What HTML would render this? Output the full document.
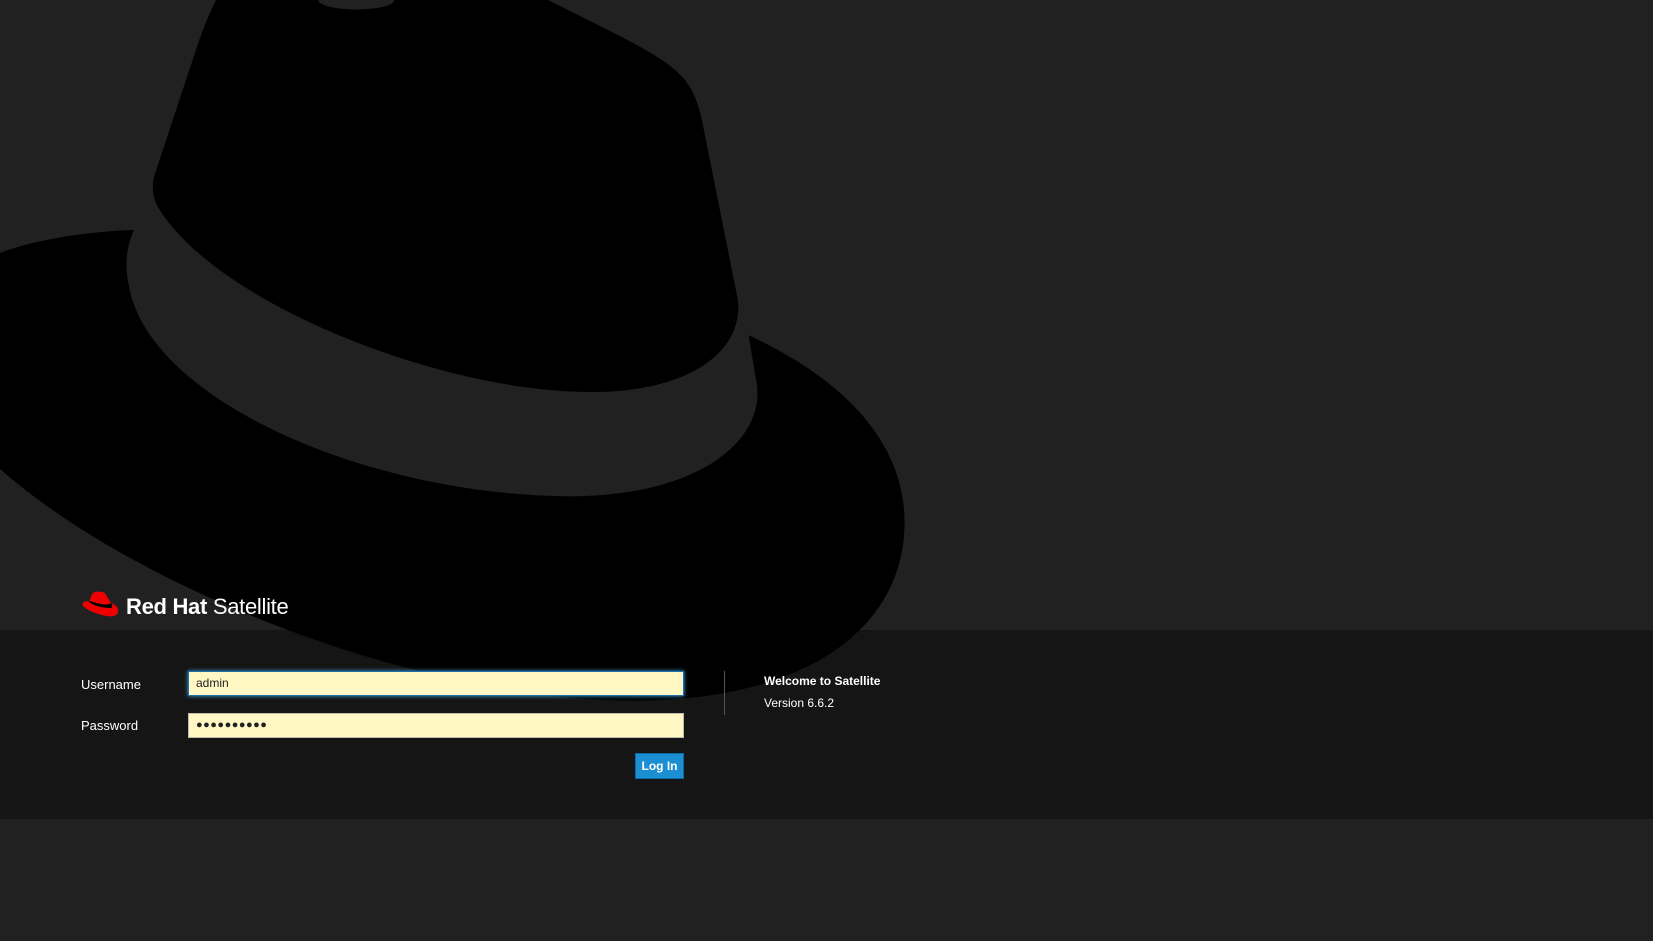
<!DOCTYPE html>
<html><head><meta charset="utf-8"><style>
html,body{margin:0;padding:0;width:1653px;height:941px;overflow:hidden;background:#212121;font-family:"Liberation Sans",sans-serif;}
svg.bg{position:absolute;left:0;top:0}
.band{position:absolute;left:0;top:630px;width:1653px;height:189px;background:rgba(0,0,0,0.36)}
.logo{position:absolute;left:81px;top:590px;height:33px;display:flex;align-items:center}
.logo span{color:#fff;font-size:22px;letter-spacing:-0.3px;margin-left:5px}
.lbl{position:absolute;left:81px;color:#fff;font-size:13px}
.inp{position:absolute;left:188px;width:496px;height:25px;background:#fff8c5;border:1px solid #bba;box-sizing:border-box;font-size:12px;padding-left:7px;line-height:23px;color:#222}
.btn{position:absolute;left:635px;top:753px;width:49px;height:26px;background:#1b8fd2;border:1px solid #0a6aa8;box-sizing:border-box;color:#fff;font-size:12px;font-weight:bold;text-align:center;line-height:24px}
</style></head><body>
<svg class="bg" width="1653" height="941" viewBox="0 0 1568 893" preserveAspectRatio="none">
<path d="M0,240 C40,225 90,220 127,218 C120,235 118,250 122,270 C140,380 350,470 540,471 C660,471 725,420 718,365 L710,318 C800,360 860,420 858,500 C855,600 760,665 600,665 C400,665 130,560 0,445 Z" fill="#000"/>
<path d="M205,0 C195,20 190,35 185,50 L147,165 C143,178 145,190 152,200 C210,290 420,372 560,372 C660,372 705,330 700,285 L665,110 C655,70 640,60 560,20 L520,0 Z" fill="#000"/>
<ellipse cx="338" cy="0" rx="36" ry="9" fill="#212121"/>
</svg>
<div class="band"></div>
<div class="logo">
<svg width="40" height="33" viewBox="0 0 40 33"><path d="M11,4 C13,1 20,1 24,3 C26,6 28,10 30,13 C35,15 38,18 37,22 C36,26 31,27 26,26 C18,25 8,21 3,17 C1,15 1,13 3,12 C5,11 7,11 8,12 Z" fill="#e00"/><path d="M8,12 C12,15 20,18 30,18 C32,18 31,14 30,13 C27,16 18,14 9,11 Z" fill="#000"/></svg>
<span><b>Red Hat</b> Satellite</span></div>
<div class="lbl" style="top:677px">Username</div>
<div class="lbl" style="top:718px">Password</div>
<div class="inp" style="top:671px;border:1px solid #1d6fa8;box-shadow:0 0 4px #3aa0e0">admin</div>
<div class="inp" style="top:713px;font-size:11px;letter-spacing:0.5px">●●●●●●●●●●</div>
<div class="btn">Log In</div>
<div style="position:absolute;left:724px;top:671px;width:1px;height:44px;background:#555"></div>
<div style="position:absolute;left:764px;top:674px;color:#fff;font-size:12px;font-weight:bold">Welcome to Satellite</div>
<div style="position:absolute;left:764px;top:696px;color:#fff;font-size:12px">Version 6.6.2</div>
</body></html>
